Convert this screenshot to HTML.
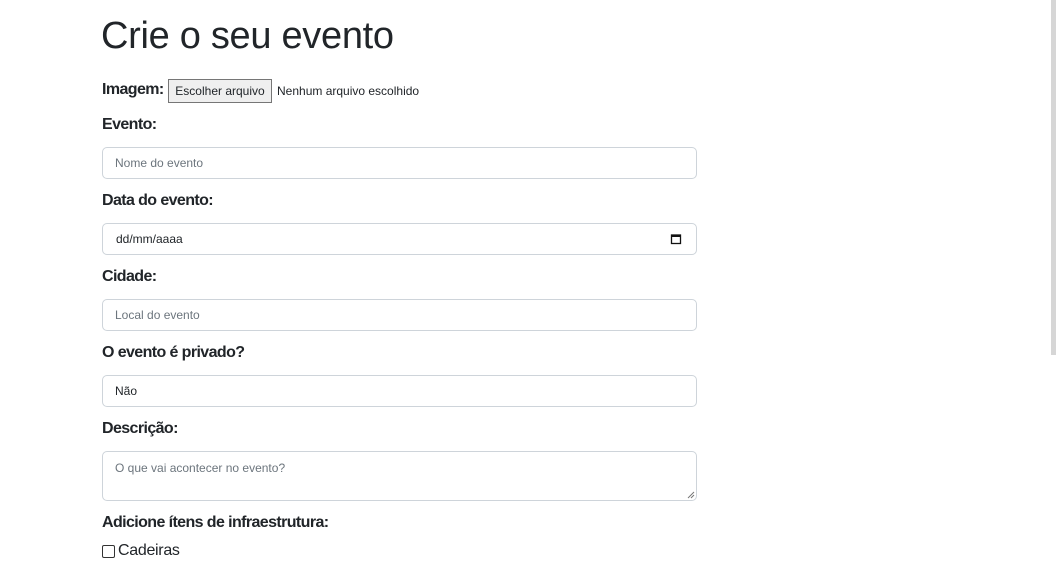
<!DOCTYPE html>
<html><head><meta charset="utf-8"><style>
body{margin:0;width:1057px;height:553px;overflow:hidden;background:#fff;font-family:"Liberation Sans",Arial,sans-serif;color:#212529;position:relative}
.a{position:absolute}
h1{position:absolute;left:101px;top:13px;margin:0;font-weight:400;font-size:38px;line-height:46px;color:#212529;letter-spacing:-0.3px}
.lbl{position:absolute;left:102px;font-size:16px;font-weight:bold;color:#212529;line-height:20px;letter-spacing:-0.6px}
.inp{position:absolute;left:102px;height:30px;border:1px solid #ced4da;border-radius:5px;background:#fff;font-size:12px;line-height:30px;padding-left:12px;box-sizing:content-box;width:581px;color:#6c757d}
.sb{position:absolute;right:0;top:0;width:7px;height:553px;background:#fff}
.sb div{position:absolute;left:1px;top:0;width:5px;height:355px;background:#d6d6d6}
</style></head><body>
<h1>Crie o seu evento</h1>
<div class="lbl" style="top:80px">Imagem:</div>
<div class="a" style="left:168px;top:79px;width:102px;height:22px;border:1px solid #767676;background:#efefef;font-size:12px;line-height:22px;text-align:center;box-sizing:content-box">Escolher arquivo</div>
<div class="a" style="left:277px;top:83px;font-size:12px;line-height:16px">Nenhum arquivo escolhido</div>
<div class="lbl" style="top:115px">Evento:</div>
<div class="inp" style="top:147px">Nome do evento</div>
<div class="lbl" style="top:191px">Data do evento:</div>
<div class="inp" style="top:223px;color:#212529;padding-left:13px;width:580px">dd/mm/aaaa
<svg style="position:absolute;right:14px;top:9px" width="12" height="12" viewBox="0 0 12 12"><rect x="1.5" y="2" width="9" height="8.5" fill="none" stroke="#111" stroke-width="1.3"/><rect x="1.5" y="2" width="9" height="2" fill="#111"/></svg></div>
<div class="lbl" style="top:267px">Cidade:</div>
<div class="inp" style="top:299px">Local do evento</div>
<div class="lbl" style="top:343px">O evento é privado?</div>
<div class="inp" style="top:375px;color:#212529">Não</div>
<div class="lbl" style="top:419px">Descrição:</div>
<div class="inp" style="top:451px;height:48px;line-height:16px;padding-top:0"><div style="margin-top:8px">O que vai acontecer no evento?</div>
<svg style="position:absolute;right:1px;bottom:1px" width="8" height="8"><path d="M7 1L1 7M7 4L4 7" stroke="#777" stroke-width="1"/></svg></div>
<div class="lbl" style="top:513px">Adicione ítens de infraestrutura:</div>
<div class="a" style="left:102px;top:545px;width:11px;height:11px;border:1px solid #333;border-radius:2px"></div>
<div class="a" style="left:118px;top:541px;font-size:16px;line-height:20px;letter-spacing:-0.3px">Cadeiras</div>
<div class="sb"><div></div></div>
</body></html>
